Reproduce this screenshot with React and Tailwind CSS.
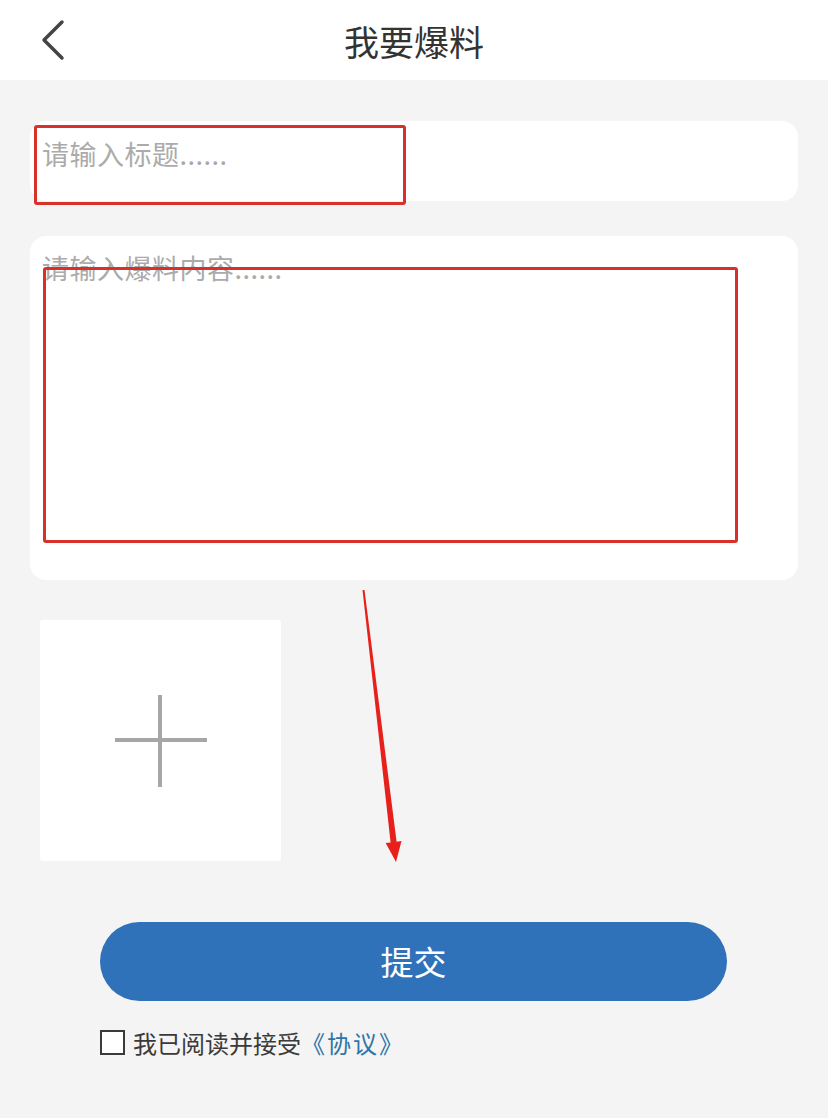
export default function App() {
  return (
    <div
      className="relative min-h-[1118px] w-full bg-[#f4f4f4]"
      style={{ fontFamily: '"Noto Sans CJK SC", "Noto Sans", sans-serif' }}
    >
      <header className="grid h-[80px] grid-cols-[1fr_auto_1fr] items-center bg-white">
        <div className="pl-[38px]">
          <svg width="28" height="42" viewBox="0 0 28 42" fill="none">
            <path d="M24 3 L6 21 L24 39" stroke="#444" strokeWidth="3.5" strokeLinecap="round" strokeLinejoin="round" />
          </svg>
        </div>
        <h1 className="text-[35px] font-normal leading-none text-[#333]">我要爆料</h1>
        <div />
      </header>

      <main className="px-[30px] pt-[41px]">
        <div className="relative h-[80px] rounded-[16px] bg-white px-[12px] pt-[19px]">
          <p className="text-[27px] leading-[28px] tracking-[0.5px] text-[#ababab]">请输入标题......</p>
          <div className="absolute left-[4px] top-[4px] h-[80px] w-[372px] rounded-[3px] border-[3px] border-[#d8302b]" />
        </div>

        <div className="relative mt-[35px] h-[344px] rounded-[16px] bg-white px-[12px] pt-[18px]">
          <p className="text-[27px] leading-[28px] tracking-[0.5px] text-[#ababab]">请输入爆料内容......</p>
          <div className="absolute left-[13px] top-[31px] h-[276px] w-[695px] rounded-[3px] border-[3px] border-[#d8302b]" />
        </div>

        <div className="ml-[10px] mt-[40px] flex h-[241px] w-[241px] items-center justify-center rounded-[3px] bg-white">
          <svg width="96" height="96" viewBox="0 0 96 96">
            <path d="M2 47 H94 M47 2 V94" stroke="#a6a6a6" strokeWidth="4" />
          </svg>
        </div>

        <button
          type="button"
          className="ml-[70px] mr-[71px] mt-[61px] flex h-[79px] w-[627px] items-center justify-center rounded-full bg-[#2f72b9] text-[33px] text-white"
        >
          提交
        </button>

        <div className="ml-[70px] mt-[29px] flex items-center gap-[8px]">
          <span className="h-[25px] w-[25px] border-2 border-[#3a3a3a] bg-white" />
          <span className="text-[24px] leading-none text-[#3a3a3a]">
            我已阅读并接受<span className="tracking-[2px] text-[#2f74a8]">《协议》</span>
          </span>
        </div>
      </main>

      <svg className="pointer-events-none absolute left-0 top-0" width="828" height="1118">
        <polygon
          points="362.5,590 364.5,590 396.6,841.7 401.5,841.1 396,862 385.7,843.1 390.6,842.5"
          fill="#e8201b"
        />
      </svg>
    </div>
  );
}
